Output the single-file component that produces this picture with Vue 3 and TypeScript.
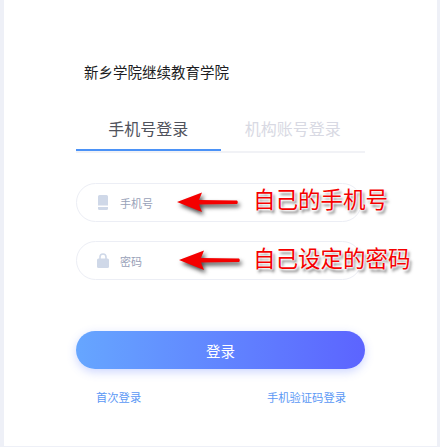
<script setup lang="ts">
const links: string[] = ['首次登录', '手机验证码登录']
</script>

<template>
  <div class="page">
    <main class="card">
      <h1 class="title">新乡学院继续教育学院</h1>
      <div class="tabs">
        <div class="tab active">手机号登录</div>
        <div class="tab">机构账号登录</div>
      </div>
      <div class="field first">
        <svg class="icon" width="10" height="15" viewBox="0 0 10 15">
          <path d="M1.500 0h7A1.500 1.500 0 0 1 10 1.500V10.500H0V1.500A1.500 1.500 0 0 1 1.500 0z" fill="#cfd8e8" />
          <path d="M0 12h10V13.500A1.500 1.500 0 0 1 8.500 15h-7A1.500 1.500 0 0 1 0 13.500z" fill="#cfd8e8" />
        </svg>
        <span class="hint">手机号</span>
        <svg class="arrow" width="66" height="24" viewBox="0 0 66 24">
          <path d="M0 11 L25 1.500 L22 9 L60 9.500 Q61.500 11 60 13 L22 13.500 L25 21 Z" fill="#f40000" />
        </svg>
      </div>
      <div class="field">
        <svg class="icon lock" width="12" height="15" viewBox="0 0 12 15">
          <path d="M3 6V4a3 3 0 0 1 6 0v2" fill="none" stroke="#cfd8e8" stroke-width="1.600" />
          <rect x="0" y="5.500" width="12" height="9.500" rx="1.500" fill="#cfd8e8" />
        </svg>
        <span class="hint">密码</span>
        <svg class="arrow arrow-two" width="66" height="24" viewBox="0 0 66 24">
          <path d="M0 11 L25 1.500 L22 9 L60 9.500 Q61.500 11 60 13 L22 13.500 L25 21 Z" fill="#f40000" />
        </svg>
      </div>
      <button class="submit" type="button">登录</button>
      <div class="links">
        <a v-for="link in links" :key="link" class="link">{{ link }}</a>
      </div>
      <span class="note note-one">自己的手机号</span>
      <span class="note note-two">自己设定的密码</span>
    </main>
  </div>
</template>

<style>
html, body { margin: 0; background: #eef0f7; }
</style>

<style scoped>
.page {
  width: 440px;
  height: 447px;
  box-sizing: border-box;
  padding: 0 3px 1px 4px;
  background: #eef0f7;
  font-family: "Noto Sans CJK SC", "Liberation Sans", sans-serif;
}
.card {
  position: relative;
  height: 100%;
  box-sizing: border-box;
  padding: 61px 72px 0;
  background: #fff;
}
.title {
  margin: 0 0 0 8px;
  font-size: 14.500px;
  line-height: 22px;
  font-weight: 400;
  color: #1c1d22;
}
.tabs {
  display: flex;
  margin-top: 23px;
  height: 45px;
  border-bottom: 2px solid #f1f2f6;
}
.tab {
  flex: 1;
  height: 45px;
  box-sizing: border-box;
  text-align: center;
  font-size: 16px;
  line-height: 44px;
  color: #d8d9e3;
}
.active {
  color: #50525c;
  border-bottom: 2px solid #4b92f7;
}
.field {
  position: relative;
  display: flex;
  align-items: center;
  height: 37px;
  width: 284px;
  margin-top: 19px;
  border: 1px solid #eceef5;
  border-radius: 20px;
}
.first { margin-top: 30px; }
.icon { margin-left: 21px; flex: none; }
.lock { margin-left: 20px; }
.hint {
  margin-left: 12px;
  font-size: 11px;
  color: #98a1b8;
}
.lock + .hint { margin-left: 11px; }
.arrow {
  position: absolute;
  left: 100px;
  top: 7px;
  filter: drop-shadow(2px 3px 2px rgba(0, 0, 0, 0.7));
}
.arrow-two { left: 102px; }
.submit {
  display: block;
  width: 289px;
  height: 38px;
  margin-top: 51px;
  border: 0;
  border-radius: 19px;
  background: linear-gradient(90deg, #66a6ff, #5c64ff);
  box-shadow: 0 3px 10px rgba(90, 120, 255, 0.3);
  color: #fff;
  font: inherit;
  font-size: 14.500px;
}
.links {
  display: flex;
  justify-content: space-between;
  margin-top: 20px;
  padding: 0 19px 0 20px;
}
.link {
  font-size: 11.300px;
  line-height: 17px;
  color: #5b98f5;
}
.note {
  position: absolute;
  left: 249px;
  font-size: 22.500px;
  line-height: 30px;
  color: #f50000;
  white-space: nowrap;
  text-shadow: 0 0 2px #fff, 0 0 2px #fff, 0 0 3px #fff, 2px 3px 3px rgba(0, 0, 0, 0.55);
}
.note-one { top: 183px; }
.note-two { top: 242px; }
</style>
